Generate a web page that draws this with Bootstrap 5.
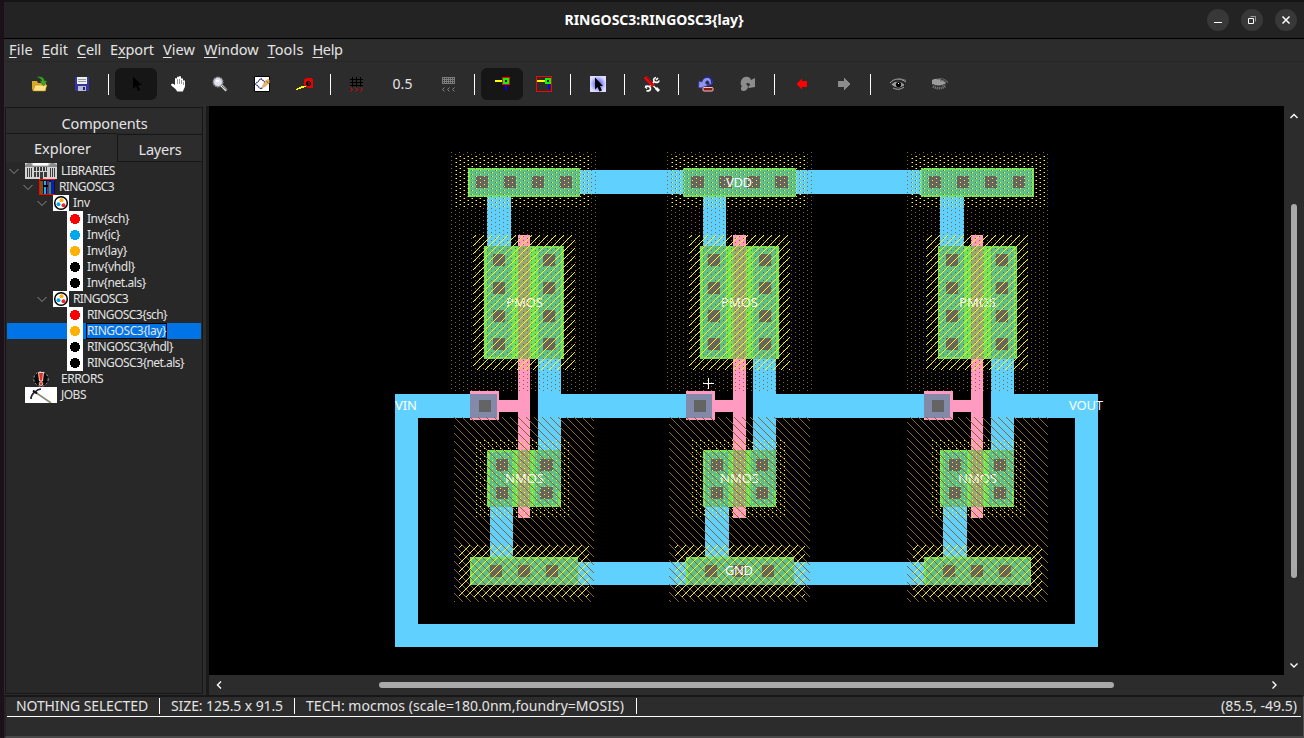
<!DOCTYPE html>
<html lang="en">
<head>
<meta charset="utf-8">
<title>RINGOSC3:RINGOSC3{lay}</title>
<meta name="viewport" content="width=device-width, initial-scale=1">
<link href="https://cdn.jsdelivr.net/npm/bootstrap@5.3.0/dist/css/bootstrap.min.css" rel="stylesheet">
<style>
:root{--ui:#2c2c2c;--edge:#171717;--ink:#e4e4e4}
body{width:1304px;height:738px;overflow:hidden;background:#1c1019;color:var(--ink);font:14px/1 "Noto Sans","Open Sans",sans-serif;padding-left:4px}
svg{display:block;flex:none}
.fit{display:inline-block;white-space:pre}
.app-window{width:1300px;height:738px;background:var(--ui)}
.title-bar{height:39px;background:#232323;border-top:2px solid #151515;border-bottom:1px solid #000}
.title-bar .btn-side{width:120px;padding-right:7px}
.win-btn{width:22px;height:22px;background:#383838}
.menu-bar{height:23px;border-bottom:1px solid #272727;padding:0 0 2px 5px;gap:9px;font-size:14.5px}
.menu-bar u{text-underline-offset:2px;text-decoration-thickness:1px}
.tool-bar{height:44px;padding-left:15px}
.tool{width:42px;height:32px;border-radius:6px}
.tool.on{background:#161616}
.tool-sep{width:1px;height:21px;background:#fff;margin:0 6px 0 5px}
.work{height:589px}
.side{width:202px;padding:1px 3px 1px 1px}
.side-box{border:1px solid var(--edge);height:587px;background:#282828}
.tab-top{height:25px;background:var(--ui);font-size:14.5px;padding:6px 0 0 1px}
.tab-row{height:29px;font-size:14.5px}
.tab-a{width:111px;background:var(--ui);border-top:1px solid var(--edge);padding:0 0 0 2px}
.tab-b{width:85px;background:var(--ui);border:1px solid var(--edge);border-right:0;padding-top:2px;margin-top:1px;height:28px}
.tree{padding-top:1px;font-size:12px}
.tree-row{height:16px;margin-left:1px;margin-right:1px;gap:4px}
.tree-row .fit{line-height:16px}
.sel{background:#0073e6}
.sel .fit{box-shadow:0 0 0 1px #000;line-height:14px}
.lv0{padding-left:2px}.lv1{padding-left:16px}.lv2{padding-left:30px}.lv3{padding-left:60px}
.lvx{padding-left:18px}
.view-pane{border-left:3px solid #1a1a1a;width:1098px}
.vbar{width:20px;height:569px;padding:7px 0 6px 6px}
.vthumb{width:6px;height:374px;border-radius:3px;background:#a9a9a9;margin-left:1px}
.hbar{height:20px;padding:0 26px 0 7px}
.hthumb{width:735px;height:6px;border-radius:3px;background:#a9a9a9;margin-right:2px}
.status{height:43px;border-top:2px solid var(--edge);border-bottom:2px solid #484848;border-right:1px solid #505050;border-left:2px solid #222;padding:0 2px 0 1px}
.status-line{height:20px;border-bottom:1px solid #fff;font-size:14px;padding-bottom:2px}
.status-sep{width:1px;height:16px;background:#fff}
.lbl{font:13px "Noto Sans",sans-serif;fill:#fff}
</style>
</head>
<body>
<svg width="0" height="0" class="position-absolute">
<defs>
<symbol id="dot" viewBox="0 0 16 16"><path fill="#fff" d="M0 0h16v16H0z"/><path d="M6 3h4v1h2v2h1v4h-1v2h-2v1H6v-1H4v-2H3V6h1V4h2z"/></symbol>
<symbol id="cellicon" viewBox="0 0 16 16"><path fill="#fff" d="M0 0h16v16H0z"/><circle cx="8" cy="8" r="6.300" fill="#fff" stroke="#000" stroke-width="1.500"/><circle cx="8.500" cy="5.300" r="2" fill="#ffb000"/><circle cx="5.500" cy="9.300" r="2" fill="#00a8f0"/><circle cx="10.500" cy="10.300" r="2" fill="#f02030"/></symbol>
<symbol id="chev" viewBox="0 0 12 16"><path d="M.5 6L5 10.500 9.500 6" fill="none" stroke="#8c8c8c"/></symbol>
</defs>
</svg>
<div class="app-window d-flex flex-column">
  <header class="title-bar d-flex align-items-center justify-content-between">
    <div class="btn-side"></div>
    <div class="fw-bold text-white"><span class="fit" data-w="179">RINGOSC3:RINGOSC3{lay}</span></div>
    <div class="btn-side d-flex justify-content-end" style="gap:12px">
      <span class="win-btn rounded-circle"><svg width="22" height="22"><path d="M7 13.500h8" stroke="#fff"/></svg></span>
      <span class="win-btn rounded-circle"><svg width="22" height="22" fill="none"><path d="M9.500 7.500h5v5" stroke="#999"/><path d="M7.500 9.500h5v5h-5z" stroke="#fff"/></svg></span>
      <span class="win-btn rounded-circle"><svg width="22" height="22"><path d="M7.500 7.500l7 7m0-7l-7 7" stroke="#fff" stroke-width="1.500"/></svg></span>
    </div>
  </header>

  <nav class="menu-bar d-flex align-items-center">
    <span class="fit" data-w="24"><u>F</u>ile</span><span class="fit" data-w="26"><u>E</u>dit</span><span class="fit" data-w="24"><u>C</u>ell</span><span class="fit" data-w="44">E<u>x</u>port</span><span class="fit" data-w="32"><u>V</u>iew</span><span class="fit" data-w="54.500"><u>W</u>indow</span><span class="fit" data-w="36"><u>T</u>ools</span><span class="fit" data-w="30"><u>H</u>elp</span>
  </nav>

  <div class="tool-bar d-flex align-items-center">
    <span class="tool d-flex align-items-center justify-content-center"><svg width="16" height="16"><path d="M0 5h5l1 2h8v8H1L0 13z" fill="#d9a92c"/><path d="M3 9h12l-2 6H1z" fill="#fbe389" stroke="#b8860b" stroke-width=".6"/><path d="M5 1c5-1 7 1 7.500 4H15l-3.500 5L8 5h2C9.500 3 8 2 5 1z" fill="#3fa52c" stroke="#1f6f14" stroke-width=".5"/></svg></span>
    <span class="tool d-flex align-items-center justify-content-center"><svg width="14" height="14"><path d="M0 0h14v14H1L0 13z" fill="#35359e"/><path d="M2 0h10v7H2z" fill="#eee"/><path d="M3 2h8v1H3zM3 4h8v1H3z" fill="#999"/><path d="M3 9h8v5H3z" fill="#b9b9d8"/><path d="M8 10h2v3H8z" fill="#202070"/></svg></span>
    <span class="tool-sep"></span>
    <span class="tool on d-flex align-items-center justify-content-center"><svg width="12" height="16"><path d="M3 1v12l3-3 2 5 2-1-2-5h4z" fill="#000"/></svg></span>
    <span class="tool d-flex align-items-center justify-content-center"><svg width="16" height="16"><path d="M5 9V3c0-1.500 1.800-1.500 2 0V1.500c.2-1.500 1.800-1.500 2 0V1c.2-1.400 1.900-1.200 2 .5V3c.2-1.200 1.900-1 2 .3V5c.3-1 2-1 2 .5V10c0 2-1.500 3-2 5.500H7C6.500 13 3 11.500 1.500 9.500 0 8 2.500 7.500 3.500 8z" fill="#fff"/><path d="M7.500 3v5M9.500 3v5M11.500 4v4M13.500 6v3" stroke="#555" stroke-width=".6"/></svg></span>
    <span class="tool d-flex align-items-center justify-content-center"><svg width="16" height="16"><path d="M9.500 9.500l5 5" stroke="#ddd" stroke-width="2.600"/><path d="M10 10l5 4" stroke="#555"/><circle cx="6" cy="6" r="4.700" fill="#dde0ee" stroke="#909090" stroke-width="1.600" stroke-dasharray="1.500 .7"/><path d="M4 4h3v2H4z" fill="#fff"/></svg></span>
    <span class="tool d-flex align-items-center justify-content-center"><svg width="16" height="16"><path d="M.5.5h15v15H.5z" fill="#fff" stroke="#000"/><path d="M7 2.500L12 7.500 7 13 1.500 8z" fill="none" stroke="#202070" stroke-width="1.200" stroke-dasharray="1.500 .6"/><path d="M8 11.500L9 8l5-5.500 1.500 1.500V7L11 11z" fill="#e4b566"/><path d="M12 4.500l2.500 3" stroke="#8b6226"/></svg></span>
    <span class="tool d-flex align-items-center justify-content-center"><svg width="17" height="12" shape-rendering="crispEdges"><path d="M8 1h2V0h6v1h1v9h-6V9H8z" fill="#e60000"/><path d="M11 3h3v1h1v3h-1v1h-3V7h-1V4h1z" fill="#000"/><path d="M12 4h2v3h-2z" fill="#5b1515"/><path d="M8 8h2v1H8zM5 8h3v2H5zM3 9h4v1H3zM1 10h4v1H1zM0 11h2v1H0z" fill="#ff0"/></svg></span>
    <span class="tool-sep"></span>
    <span class="tool d-flex align-items-center justify-content-center" style="width:39px"><svg width="14" height="15" fill="none"><path d="M0 2.500h13M0 5.500h13M0 8.500h13M2.500 0v10M6.500 0v10M10.500 0v10" stroke="#000" shape-rendering="crispEdges"/><path d="M.5 10.500l2 2-2 2M5.500 10.500l2 2-2 2M10.500 10.500l2 2-2 2" stroke="#f00"/></svg></span>
    <span class="d-flex align-items-center justify-content-center" style="width:53px"><span class="fit" data-w="20">0.5</span></span>
    <span class="tool d-flex align-items-center justify-content-center" style="width:40px"><svg width="14" height="15" fill="none"><path d="M0 .5h13M0 2.500h13M0 4.500h13M0 6.500h13M.5 0v7M2.500 0v7M4.500 0v7M6.500 0v7M8.500 0v7M10.500 0v7M12.500 0v7" stroke="#7c7c7c" shape-rendering="crispEdges"/><path d="M2.500 10.500l-2 2 2 2M7.500 10.500l-2 2 2 2M12.500 10.500l-2 2 2 2" stroke="#858585"/></svg></span>
    <span class="tool-sep"></span>
    <span class="tool on d-flex align-items-center justify-content-center"><svg width="16" height="16" shape-rendering="crispEdges"><path d="M1 4h7v2H1z" fill="#ff0"/><path d="M11 9h2v5h-2z" fill="#00f"/><path d="M8 1h8v8H8z" fill="#f00"/><path d="M9 2h6v6H9z" fill="#0f0"/><path d="M11 4h2v2h-2z" fill="#000"/></svg></span>
    <span class="tool d-flex align-items-center justify-content-center"><svg width="16" height="16" shape-rendering="crispEdges"><path d="M.5.5h15v15H.5z" fill="none" stroke="#f00"/><path d="M1 4h8v2H1z" fill="#ff0"/><path d="M12 8h2v5h-2z" fill="#00f"/><path d="M9 2h6v6H9z" fill="#0f0"/><path d="M11 4h2v2h-2z" fill="#000"/></svg></span>
    <span class="tool-sep"></span>
    <span class="tool d-flex align-items-center justify-content-center"><svg width="16" height="16"><defs><radialGradient id="glow"><stop offset=".3" stop-color="#7070f4"/><stop offset="1" stop-color="#dcdcff"/></radialGradient></defs><path fill="url(#glow)" d="M0 0h16v16H0z"/><path d="M5 1.500v12l2.500-2.500 2 4.500 2.500-1-2-4.500H13z" fill="#000"/></svg></span>
    <span class="tool-sep"></span>
    <span class="tool d-flex align-items-center justify-content-center"><svg width="16" height="16" fill="none"><path d="M12 1.500C9 2 9 5 11 6s4 0 4-1.500M12 4l2-2" stroke="#fff" stroke-width="1.700"/><path d="M1 10.500c3-1 6 0 5.500 2.500S3 15 2.500 14.500M1 10.500l2 2" stroke="#fff" stroke-width="1.700"/><path d="M10 6L6 10" stroke="#fff" stroke-width="1.800"/><path d="M1 1l8.500 9" stroke="#e30b0b" stroke-width="3.600"/><path d="M2 .5l7 8" stroke="#7d0000" stroke-width=".7"/><path d="M9.500 10l3 3" stroke="#fff" stroke-width="1.400"/><path d="M12 12l3 3" stroke="#fff" stroke-width="3"/></svg></span>
    <span class="tool-sep"></span>
    <span class="tool d-flex align-items-center justify-content-center"><svg width="16" height="16"><path d="M1 5l3 1c1-4 5-6 8-4 2 1 3 4 2 6l-3 1c1-3-1-5-2.500-4-1 .7-1 2-.5 3l3 1-8 3-2.500-.5z" fill="#8f96ee" stroke="#3939a5" stroke-width=".8"/><path d="M7 1.700c4-2 7.500 1 6.500 6" fill="none" stroke="#2424a0" stroke-width="1.400"/><rect x="5" y="11.500" width="10" height="3.500" rx="1" fill="#8e1717" stroke="#f3c5c5"/></svg></span>
    <span class="tool d-flex align-items-center justify-content-center"><svg width="16" height="16"><path d="M1 5c1-4 6-5.500 9-3l1 2 4-2v9l-6 1-1-1 2-2c0-2-3-3-4-1l2 2c0 3-2 5-5 5-2 0-3-3-1-5C.5 9 .5 7 1 5z" fill="#8c8c8c"/></svg></span>
    <span class="tool-sep"></span>
    <span class="tool d-flex align-items-center justify-content-center"><svg width="12" height="12"><path d="M1 6l5-6v3h5v6H6v3z" fill="#f00" shape-rendering="crispEdges"/></svg></span>
    <span class="tool d-flex align-items-center justify-content-center"><svg width="12" height="12"><path d="M12 6L6 0v3H0v6h6v3z" fill="#8c8c8c" shape-rendering="crispEdges"/></svg></span>
    <span class="tool-sep"></span>
    <span class="tool d-flex align-items-center justify-content-center"><svg width="17" height="12" fill="none"><path d="M1 6.500C4 2 11 2 15 7c-4 4-10 4-14-.5z" fill="#999" stroke="#222"/><circle cx="8.500" cy="6.500" r="2.600" fill="#000"/><path d="M8 5h1v1H8z" fill="#fff"/><path d="M0 5C4 0 11 0 16 4M3 10c4 2 8 1.500 11-1" stroke="#aaa"/><path d="M6 1.500c4-1.500 8 0 10 1" stroke="#777"/></svg></span>
    <span class="tool d-flex align-items-center justify-content-center"><svg width="17" height="12" fill="none"><path d="M0 2c4-2 9-2 14 3 0 4-10 4-14 1z" fill="#9c9c9c"/><path d="M5 1.500C9-.5 13 1 16 4M8 3c3-1 6 0 8 2" stroke="#666"/><path d="M1 6.500c3 2 9 2 13-1" stroke="#333"/><path d="M1 8.500c4 2.500 9 2.500 13-1" stroke="#8a8a8a" stroke-width="2.500" stroke-dasharray="1 1"/></svg></span>
  </div>

  <main class="work d-flex">
    <aside class="side">
      <div class="side-box d-flex flex-column">
        <div class="tab-top d-flex align-items-center justify-content-center"><span class="fit" data-w="86">Components</span></div>
        <div class="tab-row d-flex">
          <div class="tab-a d-flex align-items-center justify-content-center"><span class="fit" data-w="57">Explorer</span></div>
          <div class="tab-b d-flex align-items-center justify-content-center"><span class="fit" data-w="43">Layers</span></div>
        </div>
        <div class="tree flex-grow-1">
          <div class="tree-row d-flex align-items-center lv0"><svg width="12" height="16"><use href="#chev"/></svg>
            <svg width="32" height="16"><path fill="#d4d4d4" d="M0 0h32v16H0z"/><path fill="#fff" d="M8 0h15v2H8z"/><path fill="#8d8d8d" d="M0 2l3-2h3l2 3h15l3-3h3l3 2v2H0z"/><path d="M2 5h1v9H2zM4 5h1v9H4zM6 5h1v9H6zM9 4h2v4H9zM12 4h2v4h-2zM15 4h2v4h-2zM18 4h2v4h-2zM21 4h1v4h-1zM9 9h2v5H9zM12 9h2v5h-2zM15 9h3v7h-3zM19 9h3v5h-3zM25 5h1v9h-1zM27 5h1v9h-1zM29 5h1v9h-1z" fill="#3c3c3c"/></svg><span class="fit" data-w="54">LIBRARIES</span></div>
          <div class="tree-row d-flex align-items-center lv1"><svg width="12" height="16"><use href="#chev"/></svg>
            <svg width="16" height="16" shape-rendering="crispEdges"><path d="M0 0h16v16H0z" fill="#16121c"/><path d="M1 2h3v13H1z" fill="#8b4a13"/><path d="M5 2h2v13H5z" fill="#18b4e8"/><path d="M8 2h2v13H8z" fill="#7d16a0"/><path d="M10 3h2v12h-2z" fill="#1b9e3d"/><path d="M12 1h3v14h-3z" fill="#1717c0"/><path d="M.5.5h15M.5 0v16M.5 15.500h15" stroke="#f00" fill="none"/><path d="M4 6h5v2H4z" fill="#000"/></svg><span class="fit" data-w="55">RINGOSC3</span></div>
          <div class="tree-row d-flex align-items-center lv2"><svg width="12" height="16"><use href="#chev"/></svg><svg width="16" height="16"><use href="#cellicon"/></svg><span class="fit" data-w="17">Inv</span></div>
          <div class="tree-row d-flex align-items-center lv3"><svg width="16" height="16" fill="#f00"><use href="#dot"/></svg><span class="fit" data-w="42">Inv{sch}</span></div>
          <div class="tree-row d-flex align-items-center lv3"><svg width="16" height="16" fill="#00a8f0"><use href="#dot"/></svg><span class="fit" data-w="33">Inv{ic}</span></div>
          <div class="tree-row d-flex align-items-center lv3"><svg width="16" height="16" fill="#ffb000"><use href="#dot"/></svg><span class="fit" data-w="40">Inv{lay}</span></div>
          <div class="tree-row d-flex align-items-center lv3"><svg width="16" height="16"><use href="#dot"/></svg><span class="fit" data-w="48">Inv{vhdl}</span></div>
          <div class="tree-row d-flex align-items-center lv3"><svg width="16" height="16"><use href="#dot"/></svg><span class="fit" data-w="59">Inv{net.als}</span></div>
          <div class="tree-row d-flex align-items-center lv2"><svg width="12" height="16"><use href="#chev"/></svg><svg width="16" height="16"><use href="#cellicon"/></svg><span class="fit" data-w="55">RINGOSC3</span></div>
          <div class="tree-row d-flex align-items-center lv3"><svg width="16" height="16" fill="#f00"><use href="#dot"/></svg><span class="fit" data-w="80">RINGOSC3{sch}</span></div>
          <div class="tree-row d-flex align-items-center lv3 sel"><svg width="16" height="16" fill="#ffb000"><use href="#dot"/></svg><span class="fit" data-w="79">RINGOSC3{lay}</span></div>
          <div class="tree-row d-flex align-items-center lv3"><svg width="16" height="16"><use href="#dot"/></svg><span class="fit" data-w="86">RINGOSC3{vhdl}</span></div>
          <div class="tree-row d-flex align-items-center lv3"><svg width="16" height="16"><use href="#dot"/></svg><span class="fit" data-w="97">RINGOSC3{net.als}</span></div>
          <div class="tree-row d-flex align-items-center lvx"><svg width="32" height="16"><circle cx="16" cy="8" r="7.200" fill="#0a0a0a" stroke="#ccc" stroke-width=".8" stroke-dasharray="2 2"/><path d="M13.500 1.500h5l-1 8.500h-3z" fill="#f02a18" stroke="#fff" stroke-width=".8"/><circle cx="16" cy="12.700" r="1.800" fill="#f02a18" stroke="#fff" stroke-width=".7"/></svg><span class="fit" data-w="42">ERRORS</span></div>
          <div class="tree-row d-flex align-items-center lvx"><svg width="32" height="16" fill="none"><path fill="#fff" d="M0 0h32v16H0z"/><path d="M10 5l16 11" stroke="#8a8a78" stroke-width="1.700"/><path d="M6 12c0-3 1-5 4-7 2-2 4-3 6-3" stroke="#223" stroke-width="1.700"/><path d="M8 3.500l4 3" stroke="#111" stroke-width="2"/></svg><span class="fit" data-w="25">JOBS</span></div>
        </div>
      </div>
    </aside>

    <section class="view-pane d-flex flex-column">
      <div class="d-flex">
        <svg width="1075" height="569" viewBox="209 106 1075 569" shape-rendering="crispEdges">
          <defs>
            <pattern id="nwell" x="209" y="106" width="8" height="4" patternUnits="userSpaceOnUse"><path d="M6 0h1v1H6zM2 2h1v1H2z" fill="#8b632e"/></pattern>
            <pattern id="pwell" x="209" y="106" width="8" height="8" patternUnits="userSpaceOnUse"><path d="M6 0h1v1H6zM7 1h1v1H7zM0 2h1v1H0zM1 3h1v1H1zM2 4h1v1H2zM3 5h1v1H3zM4 6h1v1H4zM5 7h1v1H5z" fill="#8b632e"/></pattern>
            <pattern id="nsel" x="209" y="106" width="8" height="4" patternUnits="userSpaceOnUse"><path d="M7 0h1v1H7zM3 2h1v1H3z" fill="#ff0"/></pattern>
            <pattern id="psel" x="209" y="106" width="8" height="8" patternUnits="userSpaceOnUse"><path d="M3 0h1v1H3zM2 1h1v1H2zM1 2h1v1H1zM0 3h1v1H0zM7 4h1v1H7zM6 5h1v1H6zM5 6h1v1H5zM4 7h1v1H4z" fill="#ff0"/></pattern>
          </defs>
          <path fill="#000" d="M209 106h1075v569H209z"/>
          <!-- metal-1 buses and loop -->
          <path fill="#60d1ff" d="M580 170h103v24H580zM796 170h125v24H796zM487 197h24v49h-24zM703 197h23v49h-23zM940 197h24v49h-24zM395 394h75v24h-75zM538 394h148v24H538zM753 394h171v24H753zM991 394h107v24H991zM538 359h23v91h-23zM753 359h23v91h-23zM991 359h23v91h-23zM490 507h23v50h-23zM705 507h24v50h-24zM943 507h24v50h-24zM578 562h108v23H578zM794 562h130v23H794zM395 394h23v253h-23zM1075 394h23v253h-23zM395 624h703v23H395z"/>
          <!-- polysilicon -->
          <path fill="#ff9bc0" d="M518 235h12v283h-12zM733 235h13v283h-13zM971 235h12v283h-12zM470 391h29v29h-29zM686 391h29v29h-29zM924 391h29v29h-29zM499 400h19v12h-19zM715 400h18v12h-18zM953 400h18v12h-18z"/>
          <path fill="#838aa9" d="M470 394h27v24h-27zM686 394h26v24h-26zM924 394h26v24h-26z"/>
          <!-- active -->
          <path fill="#6be260" d="M468 168h112v29H468zM683 168h113v29H683zM921 168h113v29H921zM484 246h80v113h-80zM700 246h79v113h-79zM938 246h79v113h-79zM487 450h74v57h-74zM703 450h73v57h-73zM940 450h74v57h-74zM470 557h108v28H470zM686 557h108v28H686zM924 557h107v28H924z"/>
          <path fill="#5bbf90" d="M470 170h109v25H470zM684 170h111v25H684zM922 170h110v25H922zM487 246h24v111h-24zM538 248h23v111h-23zM703 246h23v111h-23zM753 248h23v111h-23zM940 246h24v111h-24zM991 248h23v111h-23zM490 452h23v55h-23zM535 452h23v53h-23zM538 450h23v41h-23zM705 452h24v55h-24zM751 452h23v53h-23zM753 450h23v41h-23zM943 452h24v55h-24zM988 452h24v53h-24zM991 450h23v41h-23zM472 559h106v26H472zM688 559h106v26H688zM926 559h104v26H926z"/>
          <path fill="#98a879" d="M518 246h12v113h-12zM733 246h13v113h-13zM971 246h12v113h-12zM518 450h12v57h-12zM733 450h13v57h-13zM971 450h12v57h-12z"/>
          <g id="cuts" fill="#646464"></g>
          <g class="lbl">
            <text x="506" y="307" textLength="37">PMOS</text><text x="721" y="307" textLength="37">PMOS</text><text x="959" y="307" textLength="37">PMOS</text>
            <text x="505" y="483" textLength="39">NMOS</text><text x="720" y="483" textLength="39">NMOS</text><text x="958" y="483" textLength="39">NMOS</text>
          </g>
          <path fill="url(#nwell)" d="M451 152h146v239H451zM667 152h145v239H667zM907 152h141v239H907z"/>
          <path fill="url(#nsel)" d="M456 155h133v52H456zM672 155h133v52H672zM912 155h133v52H912zM476 440h93v77h-93zM692 440h93v77h-93zM932 440h93v77h-93z"/>
          <path fill="url(#pwell)" d="M454 417h140v185H454zM669 417h141v185H669zM907 417h141v185H907z"/>
          <path fill="url(#psel)" d="M473 235h102v135H473zM689 235h101v135H689zM926 235h102v135H926zM459 545h130v52H459zM675 545h130v52H675zM913 545h129v52H913z"/>
          <g class="lbl">
            <text x="726" y="187" textLength="26">VDD</text><text x="725" y="575" textLength="28">GND</text><text x="395" y="410" textLength="22">VIN</text><text x="1069" y="410" textLength="34">VOUT</text>
          </g>
          <path stroke="#fff" d="M703 383.500h11M708.500 378v11"/>
        </svg>
        <div class="vbar d-flex flex-column justify-content-between">
          <svg width="8" height="7" fill="none"><path d="M.5 5L4 1.500 7.500 5" stroke="#fff" stroke-width="1.400"/></svg>
          <div class="vthumb"></div>
          <svg width="8" height="7" fill="none"><path d="M.5 1.500L4 5l3.500-3.500" stroke="#fff" stroke-width="1.400"/></svg>
        </div>
      </div>
      <div class="hbar d-flex align-items-center justify-content-between">
        <svg width="7" height="8" fill="none"><path d="M5 .5L1.500 4 5 7.500" stroke="#fff" stroke-width="1.400"/></svg>
        <div class="hthumb"></div>
        <svg width="7" height="8" fill="none"><path d="M1.500.5L5 4 1.500 7.500" stroke="#fff" stroke-width="1.400"/></svg>
      </div>
    </section>
  </main>

  <footer class="status">
    <div class="status-line d-flex align-items-center">
      <span class="fit" data-w="132" style="margin-left:9px">NOTHING SELECTED</span>
      <span class="status-sep" style="margin:0 11px"></span>
      <span class="fit" data-w="112">SIZE: 125.5 x 91.5</span>
      <span class="status-sep" style="margin:0 11px"></span>
      <span class="fit" data-w="318">TECH: mocmos (scale=180.0nm,foundry=MOSIS)</span>
      <span class="status-sep" style="margin:0 12px"></span>
      <span class="fit ms-auto" data-w="76" style="margin-right:4px">(85.5, -49.5)</span>
    </div>
  </footer>
</div>
<script src="https://cdn.jsdelivr.net/npm/bootstrap@5.3.0/dist/js/bootstrap.bundle.min.js"></script>
<script>
// Contact cuts: columns, rows and width of each group
const groups = [
  [[476,504,532,560],[176],12],[[691,719,747,775],[176],13],[[929,957,985,1013],[176],12],
  [[493,543],[254,282,310,338],12],[[708,759],[254,282,310,338],12],[[946,996],[254,282,310,338],12],
  [[479,694,932],[400],12],
  [[496],[459,487],12],[[540],[459,487],13],[[711,756],[459,487],12],[[949,994],[459,487],12],
  [[490,518,546],[565],12],[[705,733,762],[565],12],[[943,971,999],[565],12]
];
const cuts = document.getElementById('cuts');
for (const [xs, ys, w] of groups) for (const x of xs) for (const y of ys) {
  const r = document.createElementNS('http://www.w3.org/2000/svg', 'rect');
  r.setAttribute('x', x); r.setAttribute('y', y);
  r.setAttribute('width', w); r.setAttribute('height', 12);
  cuts.appendChild(r);
}
// Track each label so it takes exactly its allotted width
document.querySelectorAll('.fit').forEach(el => {
  const w = +el.dataset.w, n = el.textContent.length;
  el.style.letterSpacing = ((w - el.getBoundingClientRect().width) / n) + 'px';
});
</script>
</body>
</html>
